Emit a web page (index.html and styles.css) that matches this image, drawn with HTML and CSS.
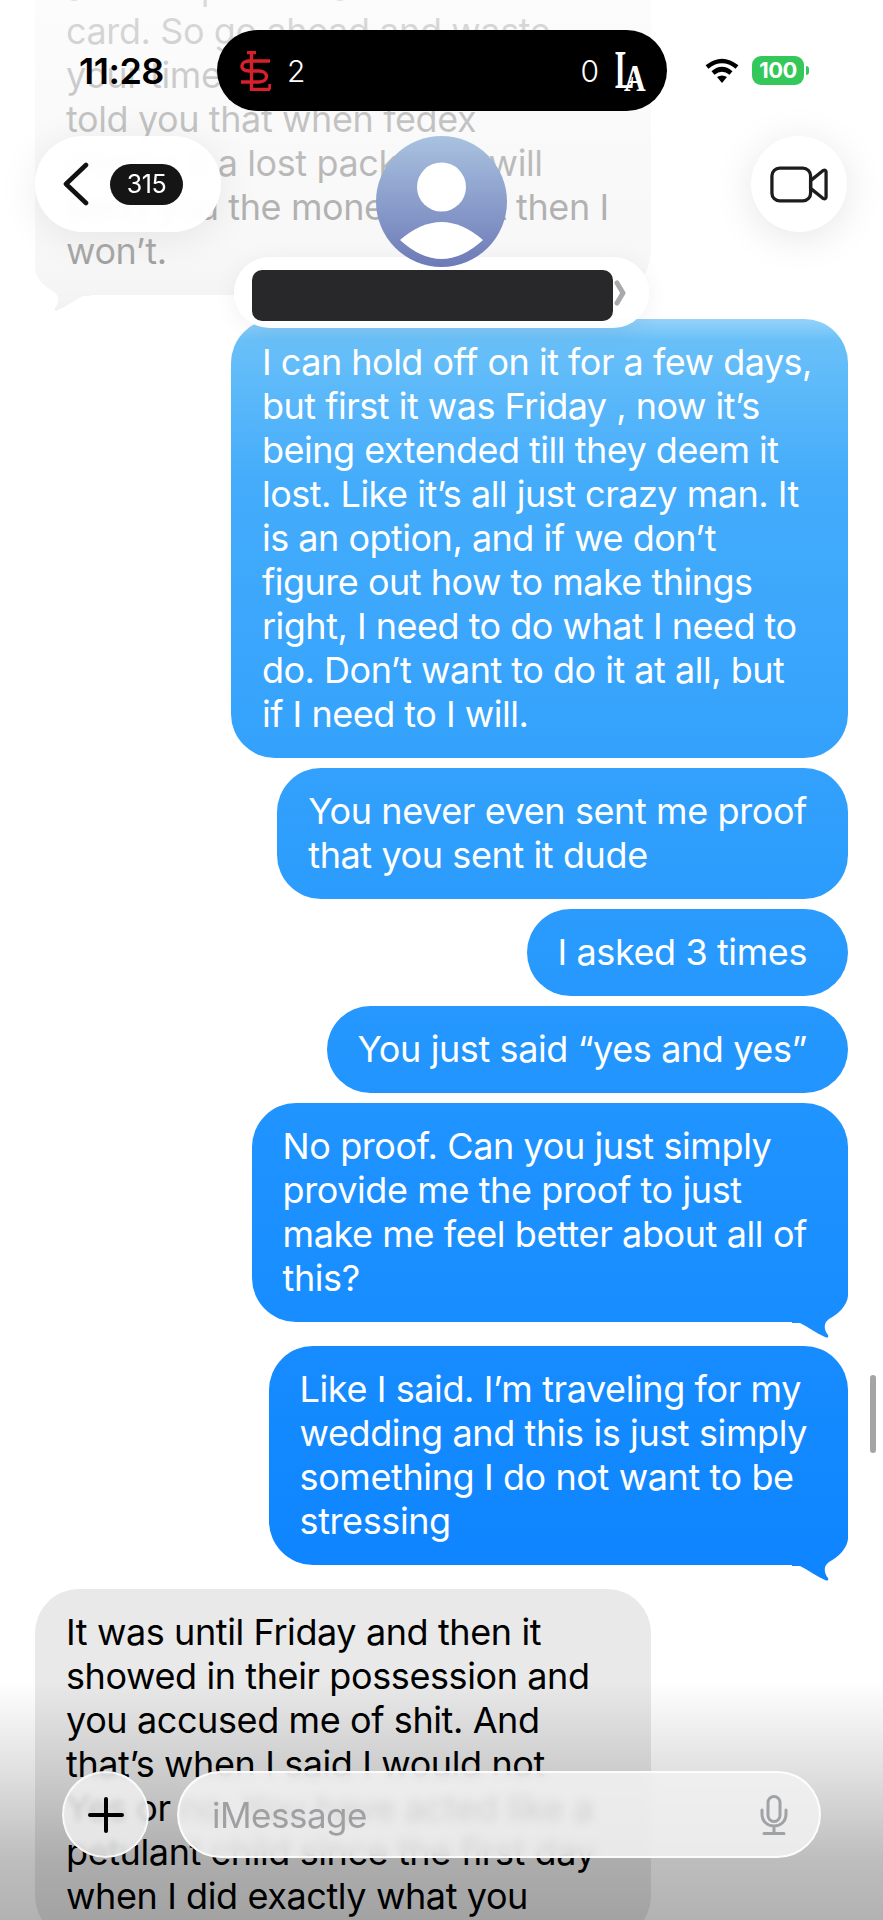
FILE: index.html
```html
<!DOCTYPE html>
<html lang="en">
<head>
  <meta charset="UTF-8" />
  <meta name="viewport" content="width=device-width, initial-scale=1.0"/>
  <title>Messages</title>
  <link rel="stylesheet" href="styles.css">
</head>
<body>

  <!-- conversation -->
  <main class="thread">
    <div class="bubble in tail">and the proof that I sent the<br>card. So go ahead and waste<br>your time with that. I already<br>told you that when fedex<br>deems it a lost package I will<br>send you the money, if not then I<br>won’t.</div>
    <div class="bubble out wide after-tail">I can hold off on it for a few days,<br>but first it was Friday , now it’s<br>being extended till they deem it<br>lost. Like it’s all just crazy man. It<br>is an option, and if we don’t<br>figure out how to make things<br>right, I need to do what I need to<br>do. Don’t want to do it at all, but<br>if I need to I will.</div>
    <div class="bubble out">You never even sent me proof<br>that you sent it dude</div>
    <div class="bubble out">I asked 3 times</div>
    <div class="bubble out">You just said “yes and yes”</div>
    <div class="bubble out tail">No proof. Can you just simply<br>provide me the proof to just<br>make me feel better about all of<br>this?</div>
    <div class="bubble out tail after-tail">Like I said. I’m traveling for my<br>wedding and this is just simply<br>something I do not want to be<br>stressing</div>
    <div class="bubble in after-tail">It was until Friday and then it<br>showed in their possession and<br>you accused me of shit. And<br>that’s when I said I would not<br>Yes or no. You have acted like a<br>petulant child since the first day<br>when I did exactly what you</div>
  </main>

  <div class="fade-top"></div>
  <div class="fade-bottom"></div>
  <div class="scrollbar"></div>

  <header class="header">
    <div class="status">
      <span class="time">11:28</span>
      <div class="island">
        <div class="team">
          <svg class="logo-stl" viewBox="0 0 32 40" width="32" height="40" fill="none" stroke="#d8202c" stroke-width="3.4">
            <path d="M8 1.500H17M12.500 1.500V38.500H31M31 33V38.500"/>
            <path d="M2 31H20C30 31 30 20 20 20H10C0 20 1 10 10 10H31"/>
          </svg>
          <span>2</span>
        </div>
        <div class="team">
          <span>0</span>
          <svg class="logo-la" viewBox="0 0 30 41" width="30" height="41" fill="#fff">
            <text class="la-l" transform="translate(0 38) scale(.8 1.5)" x="0" y="0">L</text>
            <text class="la-a" transform="translate(9 41) scale(1 1.25)" x="0" y="0">A</text>
          </svg>
        </div>
      </div>
      <div class="status-icons">
        <svg viewBox="0 0 34 25" width="34" height="25" fill="none" stroke="#000" stroke-width="4.6">
          <path d="M2 9Q17 -3 32 9"/>
          <path d="M8 15Q17 7.500 26 15"/>
          <path d="M12 19Q17 16 22 19L17 25Z" fill="#000" stroke="none"/>
        </svg>
        <div class="battery">100</div>
        <div class="battery-tip"></div>
      </div>
    </div>

    <nav class="nav">
      <div class="back">
        <svg viewBox="0 0 26 44" width="26" height="44" fill="none" stroke="#111" stroke-width="4.6" stroke-linecap="round" stroke-linejoin="round">
          <path d="M23 3L3 22L23 41"/>
        </svg>
        <span class="badge">315</span>
      </div>
      <div class="video">
        <svg viewBox="0 0 60 38" width="58" height="37" fill="none" stroke="#1c1c1e" stroke-width="3.400" stroke-linejoin="round">
          <rect x="2" y="2" width="40" height="34" rx="8"/>
          <path d="M42 15L55 4.500Q58 3.500 58 6V32Q58 34.500 55 33.500L42 23Z"/>
        </svg>
      </div>
    </nav>

    <div class="contact">
      <svg class="avatar" viewBox="0 0 131 131" width="131" height="131">
        <defs>
          <linearGradient id="avatarBg" x1="0" y1="0" x2="0" y2="1">
            <stop offset="0" stop-color="#a9c2e0"/>
            <stop offset="1" stop-color="#6d7ab7"/>
          </linearGradient>
        </defs>
        <circle cx="65.500" cy="65.500" r="65.500" fill="url(#avatarBg)"/>
        <circle cx="65.500" cy="51" r="24.500" fill="#fff"/>
        <path d="M24 104Q65.500 68 107 104Q65.500 142 24 104Z" fill="#fff"/>
      </svg>
      <div class="name-pill">
        <div class="redacted"></div>
        <svg viewBox="0 0 12 26" width="12" height="26" fill="none" stroke="#a9a9ab" stroke-width="5" stroke-linecap="round" stroke-linejoin="round">
          <path d="M3 3L9 13L3 23"/>
        </svg>
      </div>
    </div>
  </header>

  <footer class="composer">
    <div class="plus">
      <svg viewBox="0 0 36 36" width="36" height="36" stroke="#000" stroke-width="4" stroke-linecap="round">
        <path d="M18 2V34M2 18H34"/>
      </svg>
    </div>
    <div class="input">
      <span>iMessage</span>
      <svg viewBox="0 0 28 40" width="28" height="40" fill="none" stroke="#a0a2a6" stroke-width="3" stroke-linecap="round">
        <rect x="8" y="1.500" width="12" height="25" rx="6"/>
        <path d="M2 15V19C2 35 26 35 26 19V15M14 31V38M4 38.500H24"/>
      </svg>
    </div>
  </footer>

</body>
</html>
```

FILE: styles.css
```css
* {
  box-sizing: border-box;
}

body {
  margin: 0;
  height: 1920px;
  overflow: hidden;
  position: relative;
  background-color: #fff;
  font-family: Inter, "Noto Sans", sans-serif;
}

svg {
  display: block;
  flex-shrink: 0;
}

/* messages */
.thread {
  display: flex;
  flex-direction: column;
  gap: 10px;
  margin-top: -56px;
  padding: 0 35px;
}

.bubble {
  position: relative;
  width: fit-content;
  padding: 21px 41px 22px 31px;
  border-radius: 44px;
  font-size: 36px;
  line-height: 44px;
  letter-spacing: -0.4px;
  white-space: nowrap;
}

.out {
  align-self: flex-end;
  color: #fff;
  background: linear-gradient(#6fc3f8 318px, #44acfb 480px, #2b9cfd 900px, #1e92ff 1150px, #0e85ff 1570px) fixed;
}

.in {
  width: 616px;
  padding-right: 31px;
  color: #000;
  background-color: #e9e9e9;
}

.wide {
  letter-spacing: -0.5px;
  padding-right: 36px;
}

.after-tail {
  margin-top: 14px;
}

.tail::after {
  content: "";
  position: absolute;
  z-index: -1;
  right: 0;
  bottom: -16px;
  width: 56px;
  height: 60px;
  background: inherit;
  clip-path: path("M0 0H56V18C55 28 46 36 37 41C31 45 32 52 36 57C37 60 35 60 33 59C24 55 16 49 8 45H0Z");
}

.in.tail::after {
  right: auto;
  left: 0;
  transform: scaleX(-1);
}

/* top and bottom washes */
.fade-top {
  position: absolute;
  top: 0;
  left: 0;
  right: 0;
  height: 340px;
  background: linear-gradient(rgba(255,255,255,0.86), rgba(255,255,255,0.66) 255px, rgba(255,255,255,0.5) 300px, rgba(255,255,255,0));
}

.fade-bottom {
  position: absolute;
  left: 0;
  right: 0;
  bottom: 0;
  height: 240px;
  background: linear-gradient(rgba(0,0,0,0), rgba(0,0,0,0.12) 38%, rgba(0,0,0,0.26) 75%, rgba(0,0,0,0.3));
}

.scrollbar {
  position: absolute;
  top: 1375px;
  left: 870px;
  width: 6px;
  height: 78px;
  border-radius: 3px;
  background-color: #a5a5a5;
}

/* status bar */
.header {
  position: absolute;
  top: 0;
  left: 0;
  right: 0;
}

.status {
  display: flex;
  align-items: center;
  padding: 30px 0 0 79px;
}

.time {
  width: 85px;
  font-size: 36px;
  font-weight: 600;
  letter-spacing: -0.5px;
  color: #000;
}

.island {
  display: flex;
  align-items: center;
  justify-content: space-between;
  width: 450px;
  height: 81px;
  margin-left: 53px;
  padding: 0 22px;
  border-radius: 41px;
  background-color: #000;
  color: #fff;
  font-size: 30px;
  font-weight: 300;
}

.team {
  display: flex;
  align-items: center;
  gap: 16px;
}

.logo-la {
  overflow: visible;
}

.la-l, .la-a {
  font-family: "Liberation Serif", serif;
  font-weight: 700;
}

.la-l {
  font-size: 36px;
}

.la-a {
  font-size: 30px;
}

.status-icons {
  display: flex;
  align-items: center;
  margin-left: 38px;
}

.battery {
  width: 52px;
  height: 29px;
  margin-left: 13px;
  border-radius: 9px;
  background-color: #34c759;
  color: #fff;
  font-size: 22px;
  font-weight: 700;
  line-height: 29px;
  text-align: center;
  letter-spacing: -0.5px;
}

.battery-tip {
  width: 3px;
  height: 9px;
  margin-left: 2px;
  border-radius: 0 3px 3px 0;
  background-color: #34c759;
}

/* nav */
.nav {
  display: flex;
  justify-content: space-between;
  margin-top: 25px;
  padding: 0 36px 0 35px;
}

.back {
  display: flex;
  align-items: center;
  gap: 21px;
  width: 186px;
  height: 96px;
  padding-left: 28px;
  border-radius: 48px;
  background-color: rgba(255,255,255,0.94);
  backdrop-filter: blur(4px);
  box-shadow: 0 6px 40px rgba(0,0,0,0.08);
}

.badge {
  width: 73px;
  height: 41px;
  border-radius: 21px;
  background-color: #151515;
  color: #fff;
  font-size: 25px;
  line-height: 41px;
  text-align: center;
  letter-spacing: -0.5px;
}

.video {
  display: flex;
  align-items: center;
  justify-content: center;
  width: 96px;
  height: 96px;
  border-radius: 50%;
  background-color: #fff;
  box-shadow: 0 6px 40px rgba(0,0,0,0.1);
}

.contact {
  position: absolute;
  top: 136px;
  left: 234px;
  width: 415px;
  display: flex;
  flex-direction: column;
  align-items: center;
}

.avatar {
  position: relative;
  z-index: 1;
}

.name-pill {
  display: flex;
  align-items: center;
  gap: 1px;
  width: 100%;
  height: 71px;
  margin-top: -10px;
  padding-left: 18px;
  border-radius: 36px;
  background-color: rgba(255,255,255,0.96);
  box-shadow: 0 4px 24px rgba(0,0,0,0.06);
}

.redacted {
  width: 361px;
  height: 51px;
  margin-top: 6px;
  border-radius: 10px;
  background-color: #28282a;
}

/* composer */
.composer {
  position: absolute;
  top: 1771px;
  left: 62px;
  display: flex;
  gap: 28px;
}

.plus {
  display: flex;
  align-items: center;
  justify-content: center;
  width: 87px;
  height: 87px;
  border-radius: 50%;
  border: 2px solid rgba(255,255,255,0.75);
  background-color: rgba(240,240,240,0.82);
  backdrop-filter: blur(3px);
}

.input {
  display: flex;
  align-items: center;
  justify-content: space-between;
  width: 644px;
  height: 87px;
  padding: 0 31px 0 33px;
  border-radius: 44px;
  border: 2px solid rgba(255,255,255,0.85);
  background-color: rgba(241,241,242,0.87);
  backdrop-filter: blur(5px);
  color: #a0a0a2;
  font-size: 35px;
  letter-spacing: -0.5px;
}
```
